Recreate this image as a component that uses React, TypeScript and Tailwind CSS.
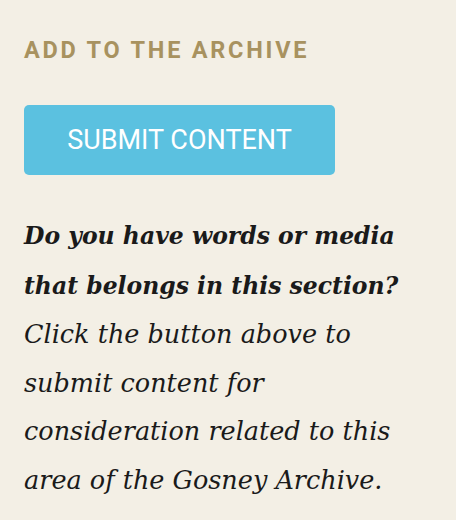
export default function App() {
  return (
    <div className="min-h-[520px] w-[456px] bg-[#f3efe5] px-6 pt-[37px]">
      <h3 className="font-['Roboto',sans-serif] text-[23.5px] font-bold uppercase leading-[26px] tracking-[2.75px] text-[#a8925f]">
        Add to the Archive
      </h3>

      <button className="mt-[42px] flex h-[70px] w-[311px] items-center justify-center rounded-[5px] bg-[#5bc1e0] font-['Roboto',sans-serif] text-[27px] uppercase text-white">
        Submit Content
      </button>

      <p className="mt-[36px] w-[396px] font-['DejaVu_Serif',serif] text-[25.5px] italic leading-[48.5px] text-[#1a1a1a]">
        <strong className="text-[23.5px] font-bold">Do you have words or media that belongs in this section?</strong>{' '}
        Click the button above to submit content for consideration related to this area of the Gosney Archive.
      </p>
    </div>
  );
}
